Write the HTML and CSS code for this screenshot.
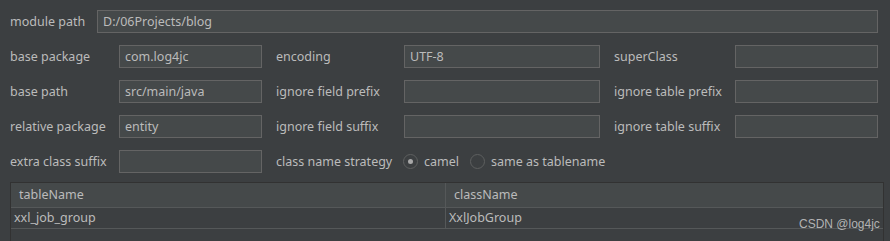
FILE: index.html
```html
<!DOCTYPE html>
<html lang="en">
<head>
    <meta charset="UTF-8">
    <title>Code Generator</title>
    <link rel="stylesheet" href="styles.css">
</head>
<body>
    <div class="panel">
        <div class="form-grid">
            <div class="module-row">
                <label>module path</label>
                <div class="field">D:/06Projects/blog</div>
            </div>

            <label>base package</label>
            <div class="field">com.log4jc</div>
            <label>encoding</label>
            <div class="field">UTF-8</div>
            <label>superClass</label>
            <div class="field"></div>

            <label>base path</label>
            <div class="field">src/main/java</div>
            <label>ignore field prefix</label>
            <div class="field"></div>
            <label>ignore table prefix</label>
            <div class="field"></div>

            <label>relative package</label>
            <div class="field">entity</div>
            <label>ignore field suffix</label>
            <div class="field"></div>
            <label>ignore table suffix</label>
            <div class="field"></div>

            <label>extra class suffix</label>
            <div class="field"></div>
            <label>class name strategy</label>
            <div class="radios">
                <span class="radio checked"></span><span class="radio-text">camel</span>
                <span class="radio"></span><span class="radio-text">same as tablename</span>
            </div>
        </div>

        <div class="table">
            <div class="thead">
                <div class="th col-left">tableName</div>
                <div class="th">className</div>
            </div>
            <div class="tr">
                <div class="td col-left">xxl_job_group</div>
                <div class="td">XxlJobGroup</div>
            </div>
        </div>
        <div class="watermark">CSDN @log4jc</div>
    </div>
</body>
</html>
```

FILE: styles.css
```css
html, body {
    margin: 0;
    height: 100%;
}
body {
    background: #3c3f41;
    color: #bbbbbb;
    font-family: 'Noto Sans', 'Open Sans', Arial, sans-serif;
    font-size: 12.5px;
    overflow: hidden;
}
.panel {
    position: relative;
    padding: 10px 0 0 10px;
}
.form-grid {
    display: grid;
    grid-template-columns: 95px 143px 114px 196px 107px 143px;
    grid-auto-rows: 23px;
    column-gap: 14px;
    row-gap: 12px;
    align-items: center;
}
.form-grid label {
    white-space: nowrap;
    line-height: 23px;
}
.module-row {
    grid-column: 1 / -1;
    display: flex;
    gap: 14px;
    height: 23px;
    align-items: center;
}
.module-row label {
    width: 73px;
    flex: none;
}
.module-row .field {
    flex: 1;
}
.field {
    box-sizing: border-box;
    height: 23px;
    background: #45494a;
    border: 1px solid #646464;
    padding: 0 5px;
    line-height: 21px;
    white-space: nowrap;
}
.radios {
    grid-column: 4 / span 3;
    display: flex;
    align-items: center;
    height: 23px;
    margin-left: -1px;
}
.radio {
    box-sizing: border-box;
    width: 15px;
    height: 15px;
    border-radius: 50%;
    border: 1px solid #5e6060;
    background: #3c3f41;
    display: flex;
    align-items: center;
    justify-content: center;
}
.radio.checked::after {
    content: "";
    width: 5px;
    height: 5px;
    border-radius: 50%;
    background: #a9a9a9;
}
.radio-text {
    margin: 0 11px 0 6px;
}
.table {
    margin-top: 9px;
    width: 872px;
    border: 1px solid #323232;
    border-bottom: none;
    height: 60px;
}
.thead, .tr {
    display: grid;
    grid-template-columns: 435px 1fr;
}
.thead {
    background: #45494a;
    height: 24px;
    border-bottom: 1px solid #555859;
}
.tr {
    height: 20px;
    border-bottom: 1px solid #555859;
}
.th {
    line-height: 24px;
    padding-left: 8px;
}
.td {
    line-height: 20px;
    padding-left: 3px;
}
.col-left {
    border-right: 1px solid #555859;
}
.watermark {
    position: absolute;
    left: 799px;
    top: 217px;
    font-family: 'Liberation Sans', Arial, sans-serif;
    font-size: 12px;
    color: rgba(210, 210, 210, 0.8);
}
```
